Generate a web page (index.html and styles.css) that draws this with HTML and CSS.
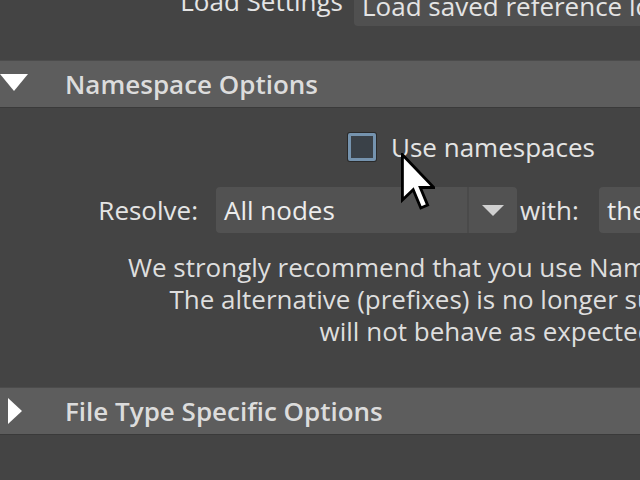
FILE: index.html
```html
<!DOCTYPE html>
<html>
<head>
<meta charset="utf-8">
<link rel="stylesheet" href="styles.css">
</head>
<body>
<div class="page">
  <div class="top-row">
    <span class="top-label">Load Settings</span>
    <div class="top-field">Load saved reference loaded state</div>
  </div>

  <section class="frame">
    <div class="frame-header">
      <svg class="tri-down" width="28" height="17" viewBox="0 0 28 17"><polygon points="0,0 28,0 14,17" fill="#ffffff"/></svg>
      <span class="frame-title">Namespace Options</span>
    </div>
    <div class="frame-body">
      <div class="check-row">
        <span class="checkbox"></span>
        <span class="check-label">Use namespaces</span>
      </div>
      <div class="resolve-row">
        <span class="row-label">Resolve:</span>
        <div class="combo">
          <span class="combo-text">All nodes</span>
          <span class="combo-btn"><svg width="22" height="11" viewBox="0 0 22 11"><polygon points="0,0 22,0 11,11" fill="#d0d0d0"/></svg></span>
        </div>
        <span class="with-label">with:</span>
        <div class="combo combo-wide">
          <span class="combo-text">the file name</span>
        </div>
      </div>
      <div class="note">
        <div class="note-line">We strongly recommend that you use Namespaces in Maya.</div>
        <div class="note-line">The alternative (prefixes) is no longer supported, and</div>
        <div class="note-line">will not behave as expected.</div>
      </div>
    </div>
  </section>

  <section class="frame">
    <div class="frame-header">
      <svg class="tri-right" width="14" height="26" viewBox="0 0 14 26"><polygon points="0,0 14,13 0,26" fill="#ffffff"/></svg>
      <span class="frame-title">File Type Specific Options</span>
    </div>
  </section>

  <svg class="cursor" width="34" height="60" viewBox="0 0 12 21">
    <path d="M0.5 0.5 L0.5 16.5 L4.3 12.9 L7 19.3 L9.4 18.3 L6.8 12.1 L11.6 12.1 Z" fill="#ffffff" stroke="#000000" stroke-width="1" stroke-linejoin="miter"/>
  </svg>
</div>
</body>
</html>
```

FILE: styles.css
```css
html, body {
  margin: 0;
  padding: 0;
  background: #444444;
  width: 640px;
  height: 480px;
  overflow: hidden;
}

.page {
  position: relative;
  width: 640px;
  height: 480px;
  overflow: hidden;
  font-family: "Open Sans", "Noto Sans", sans-serif;
  font-size: 26px;
  color: #e4e4e4;
}

.top-row {
  display: flex;
  align-items: flex-end;
  margin-top: -8px;
  height: 34px;
  white-space: nowrap;
}

.top-label {
  width: 343px;
  text-align: right;
  padding-bottom: 7px;
  flex: none;
}

.top-field {
  margin-left: 11px;
  flex: none;
  width: 320px;
  height: 34px;
  line-height: 26px;
  padding-left: 8px;
  background: #505050;
  border-radius: 4px;
  box-sizing: border-box;
  display: flex;
  align-items: flex-end;
  padding-bottom: 7px;
}

.frame {
  margin-top: 34px;
}

.frame + .frame {
  margin-top: 0;
}

.frame-header {
  height: 48px;
  background: #5d5d5d;
  border-top: 1px solid #4c4c4c;
  border-bottom: 1px solid #3a3a3a;
  display: flex;
  align-items: center;
  box-sizing: border-box;
  position: relative;
}

.frame-title {
  margin-left: 65px;
  color: #dcdcdc;
  font-weight: 600;
  white-space: nowrap;
}

.tri-down {
  position: absolute;
  left: 0;
  top: 13px;
}

.tri-right {
  position: absolute;
  left: 8px;
  top: 10px;
}

.frame-body {
  height: 279px;
  display: flex;
  flex-direction: column;
}

.check-row {
  display: flex;
  align-items: center;
  margin-top: 25px;
  padding-left: 348px;
  height: 28px;
  white-space: nowrap;
}

.checkbox {
  width: 28px;
  height: 28px;
  box-sizing: border-box;
  border: 3px solid #7593ae;
  background: #3a4148;
  border-radius: 2px;
  box-shadow: 0 0 0 1px #2a2a2a;
  flex: none;
}

.check-label {
  margin-left: 15px;
}

.resolve-row {
  display: flex;
  align-items: center;
  margin-top: 26px;
  height: 46px;
  white-space: nowrap;
}

.row-label {
  width: 198px;
  text-align: right;
  flex: none;
}

.combo {
  margin-left: 18px;
  width: 301px;
  height: 46px;
  flex: none;
  display: flex;
  align-items: stretch;
  background: #525252;
  border-radius: 4px;
}

.combo-text {
  flex: 1;
  display: flex;
  align-items: center;
  padding-left: 8px;
  color: #ececec;
}

.combo-btn {
  width: 48px;
  flex: none;
  border-left: 2px solid #4a4a4a;
  display: flex;
  align-items: center;
  justify-content: center;
}

.with-label {
  width: 65px;
  text-align: center;
  flex: none;
}

.combo-wide {
  margin-left: 17px;
  width: 200px;
}

.note {
  margin-top: 18px;
  width: 980px;
  text-align: center;
  line-height: 32px;
  color: #dedede;
  white-space: nowrap;
}

.cursor {
  position: absolute;
  left: 401px;
  top: 153px;
}
```
